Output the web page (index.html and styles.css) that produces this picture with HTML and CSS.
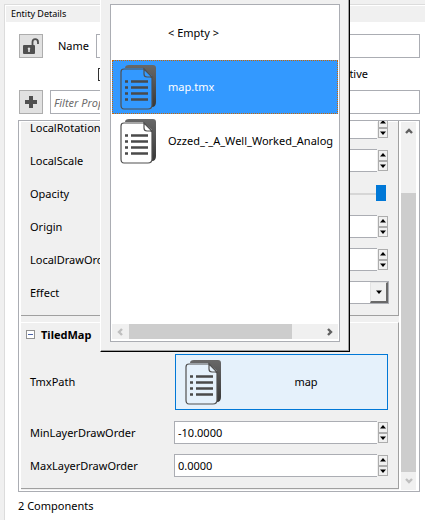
FILE: index.html
```html
<!DOCTYPE html>
<html lang="en">
<head>
<meta charset="utf-8">
<title>Entity Details</title>
<link rel="stylesheet" href="styles.css">
</head>
<body>
<svg width="0" height="0" class="defs" aria-hidden="true">
  <defs>
    <linearGradient id="shade" x1="0" y1="0" x2="0" y2="1"><stop offset="0" stop-color="#686868"/><stop offset="1" stop-color="#383838"/></linearGradient>
  </defs>
  <symbol id="doc" viewBox="0 0 37 46">
    <path d="M5 4 Q5 1 9 1 H33 Q36 1 36 4 V38 Q36 43 32 43 V12 L23 4Z" fill="url(#shade)"/>
    <path d="M4 5 H24 L32 14 V41 Q32 45 28 45 H4 Q1 45 1 41 V8 Q1 5 4 5Z" fill="var(--paper)" stroke="#505050" stroke-width="1.2"/>
    <path d="M24 5 V10 Q24 13 27 13 H32Z" fill="var(--paper)" stroke="#505050" stroke-width="1.2"/>
    <path d="M5 17.5h3M5 23.5h3M5 29.5h3M5 35.5h3M11 17.5h17M11 23.5h17M11 29.5h17M11 35.5h17" stroke="#4a4a4a" stroke-width="2.6"/>
  </symbol>
  <symbol id="up" viewBox="0 0 8 8"><path d="M4 2 L7 5.5 H1Z" fill="#000"/></symbol>
  <symbol id="down" viewBox="0 0 8 8"><path d="M4 6 L7 2.5 H1Z" fill="#000"/></symbol>
  <symbol id="chev" viewBox="0 0 8 8"><path d="M1 6 L4 3 L7 6" fill="none" stroke="currentColor" stroke-width="2.4"/></symbol>
</svg>

<main class="panel">
  <h1 class="title">Entity Details</h1>
  <div class="top">
    <div class="line">
      <button class="tool" aria-label="Lock"><svg width="16" height="16" viewBox="0 0 16 16"><path d="M9.500 7 V4 Q9.500 1.200 12.200 1.200 Q15 1.200 15 4 V6" fill="none" stroke="#505050" stroke-width="1.800"/><rect x="0" y="7" width="12" height="9" rx="1" fill="#505050"/><path d="M6 9.500a1.300 1.300 0 0 1 .8 2.300V14H5.200v-2.200A1.300 1.300 0 0 1 6 9.500" fill="#e1e1e1"/></svg></button>
      <label class="name" for="name">Name</label>
      <input class="box" id="name" type="text">
    </div>
    <label class="active"><input type="checkbox"><span>Active</span></label>
    <div class="line">
      <button class="tool" aria-label="Add"><svg width="14" height="14" viewBox="0 0 14 14"><path d="M7 1V13M1 7H13" stroke="#505050" stroke-width="4"/></svg></button>
      <input class="box filter" type="text" placeholder="Filter Properties" aria-label="Filter">
    </div>
  </div>

  <div class="scroller">
    <div class="sections">
      <section class="section first">
        <div class="row"><label for="rot">LocalRotation</label><div class="spin"><input id="rot" type="text"><div class="steps"><button aria-label="Up"><svg><use href="#up"/></svg></button><button aria-label="Down"><svg><use href="#down"/></svg></button></div></div></div>
        <div class="row"><label for="scale">LocalScale</label><div class="spin"><input id="scale" type="text"><div class="steps"><button aria-label="Up"><svg><use href="#up"/></svg></button><button aria-label="Down"><svg><use href="#down"/></svg></button></div></div></div>
        <div class="row"><label for="opacity">Opacity</label><input class="slider" id="opacity" type="range" value="100"></div>
        <div class="row"><label for="origin">Origin</label><div class="spin"><input id="origin" type="text"><div class="steps"><button aria-label="Up"><svg><use href="#up"/></svg></button><button aria-label="Down"><svg><use href="#down"/></svg></button></div></div></div>
        <div class="row"><label for="order">LocalDrawOrder</label><div class="spin"><input id="order" type="text"><div class="steps"><button aria-label="Up"><svg><use href="#up"/></svg></button><button aria-label="Down"><svg><use href="#down"/></svg></button></div></div></div>
        <div class="row"><label for="effect">Effect</label><div class="combo"><select id="effect"><option></option></select><span class="drop"><svg><use href="#down"/></svg></span></div></div>
      </section>
      <section class="section">
        <h2 class="heading"><button class="toggle" aria-label="Collapse"></button>TiledMap</h2>
        <div class="row tall"><label for="tmx">TmxPath</label><button class="asset" id="tmx"><svg class="doc"><use href="#doc"/></svg><span>map</span></button></div>
        <div class="row"><label for="min">MinLayerDrawOrder</label><div class="spin"><input id="min" type="text" value="-10.0000"><div class="steps"><button aria-label="Up"><svg><use href="#up"/></svg></button><button aria-label="Down"><svg><use href="#down"/></svg></button></div></div></div>
        <div class="row"><label for="max">MaxLayerDrawOrder</label><div class="spin"><input id="max" type="text" value="0.0000"><div class="steps"><button aria-label="Up"><svg><use href="#up"/></svg></button><button aria-label="Down"><svg><use href="#down"/></svg></button></div></div></div>
      </section>
    </div>
    <div class="vbar">
      <svg class="arrow"><use href="#chev"/></svg>
      <div class="vthumb"></div>
      <svg class="arrow flip"><use href="#chev"/></svg>
    </div>
  </div>
  <p class="count">2 Components</p>
</main>

<div class="popup">
  <div class="list">
    <ul class="items">
      <li class="item"><span class="doc"></span>&lt; Empty &gt;</li>
      <li class="item selected"><svg class="doc"><use href="#doc"/></svg>map.tmx</li>
      <li class="item"><svg class="doc"><use href="#doc"/></svg>Ozzed_-_A_Well_Worked_Analog</li>
    </ul>
    <div class="hbar">
      <svg class="arrow left"><use href="#chev"/></svg>
      <div class="hthumb"></div>
      <svg class="arrow right"><use href="#chev"/></svg>
    </div>
  </div>
</div>
</body>
</html>
```

FILE: styles.css
```css
* { box-sizing: border-box; }
body {
  margin: 0;
  padding: 4px 0 0 4px;
  min-height: 100vh;
  display: flex;
  overflow: hidden;
  background: #f0f0f0;
  color: #000;
  font: 11px/16px "Noto Sans", "Open Sans", sans-serif;
}
button, input, select { font: inherit; color: inherit; margin: 0; padding: 0; border-radius: 0; }
.defs { position: absolute; }
.panel {
  flex: 1;
  min-width: 0;
  border: solid #dcdcdc;
  border-width: 1px 0 0 1px;
  padding: 1px 0 0 1px;
  background: #fff;
}
.title {
  margin: 0;
  height: 16px;
  padding-left: 5px;
  background: #f0f0f0;
  font-size: 9px;
  font-weight: 400;
  line-height: 16px;
}
.top { padding: 12px 5px 0 13px; }
.line { display: flex; height: 24px; }
.tool {
  width: 24px;
  height: 24px;
  display: grid;
  place-items: center;
  border: 1px solid #adadad;
  background: #e1e1e1;
}
.name { width: 53px; padding-left: 15px; line-height: 24px; }
.box { flex: 1; min-width: 0; height: 24px; border: 1px solid #abadb3; background: #fff; padding: 0 3px; }
.filter { margin-left: 7px; }
.filter::placeholder { color: #6d6d6d; font-style: italic; opacity: 1; }
.active { display: flex; align-items: center; height: 32px; padding: 0 52px 0 79px; }
.active input { appearance: none; width: 13px; height: 13px; border: 1px solid #333; }
.active span { margin-left: auto; }
.scroller {
  display: flex;
  height: 372px;
  margin: 6px 5px 0 12px;
  padding: 1px 3px 1px 2px;
  border: 1px solid #abadb3;
  overflow: hidden;
}
.sections { flex: 1; min-width: 0; background: #f0f0f0; }
.section { border: solid #a0a0a0; border-width: 0 1px 1px 0; padding: 0 9px 6px; }
.section + .section { margin-top: 6px; border-top: 1px solid #fff; }
.first { margin-top: -11px; }
.row { display: grid; grid-template-columns: 144px 1fr; align-items: center; height: 33px; }
.tall { height: 68px; }
.spin { display: flex; height: 23px; }
.spin input { flex: 1; min-width: 0; border: 1px solid #abadb3; border-right: 0; background: #fff; padding: 0 3px; }
.steps { display: flex; flex-direction: column; width: 10px; padding: 1px 0; margin: 0 1px; }
.steps button { flex: 1; display: grid; place-items: center; border: 1px solid #adadad; background: #f0f0f0; min-height: 0; }
.steps svg, .drop svg { width: 8px; height: 8px; }
.slider { appearance: none; width: 100%; height: 20px; padding-right: 3px; background: transparent; }
.slider::-webkit-slider-runnable-track { height: 2px; background: #d6d6d6; }
.slider::-webkit-slider-thumb { appearance: none; width: 10px; height: 16px; margin-top: -8px; background: #0078d7; }
.combo { display: flex; height: 23px; border: 1px solid #abadb3; background: #fff; }
.combo select { flex: 1; min-width: 0; appearance: none; border: 0; background: #fff; }
.drop { display: grid; place-items: center; width: 18px; border: solid; border-width: 1px 2px 2px 1px; border-color: #e3e3e3 #696969 #696969 #e3e3e3; background: #f0f0f0; }
.heading { display: flex; align-items: center; gap: 6px; height: 23px; margin: 0 0 2px; font-size: 11px; font-weight: 700; }
.toggle {
  width: 9px;
  height: 9px;
  margin-left: -4px;
  border: 1px solid #919191;
  background: linear-gradient(#4b63a7, #4b63a7) center / 5px 1px no-repeat, #fff;
}
.asset { --paper: #e5f1fb; display: flex; align-items: center; height: 56px; margin: 0 1px; padding: 0 9px; border: 1px solid #0078d7; background: #e5f1fb; }
.asset span { flex: 1; padding-left: 12px; text-align: center; }
.doc { flex: none; width: 37px; height: 46px; }
.vbar { display: flex; flex-direction: column; align-items: center; width: 15px; margin: 0 0 0 2px; background: #f0f0f0; color: #606060; }
.arrow { flex: none; width: 8px; height: 8px; }
.vbar .arrow { margin: 5px 0; }
.vthumb { width: 15px; flex: 1; margin-top: 53px; background: #cdcdcd; }
.flip { transform: rotate(180deg); color: #bfbfbf; }
.count { margin: 6px 0 0 12px; }
.popup {
  position: absolute;
  top: 0;
  left: 100px;
  width: 250px;
  padding: 4px 9px 9px;
  border: solid #000;
  border-width: 0 1px 1px 0;
  border-left: 1px solid #fff;
  box-shadow: inset -1px -1px #a0a0a0;
  background: #f0f0f0;
}
.list { border: 1px solid #abadb3; padding: 1px 1px 2px; background: #fff; }
.items { height: 318px; margin: 0; padding: 0; list-style: none; }
.item { --paper: #fff; display: flex; align-items: center; gap: 11px; height: 54px; padding-left: 8px; white-space: nowrap; overflow: hidden; }
.selected { --paper: #3399ff; padding-left: 7px; border: 1px dotted #cc6600; background: #3399ff; color: #fff; }
.hbar { display: flex; align-items: center; height: 15px; background: #f0f0f0; color: #606060; }
.hthumb { flex: 1; height: 15px; margin-right: 34px; background: #cdcdcd; }
.left { margin: 0 5px 0 4px; transform: rotate(-90deg); color: #bfbfbf; }
.right { margin-right: 4px; transform: rotate(90deg); }
```
